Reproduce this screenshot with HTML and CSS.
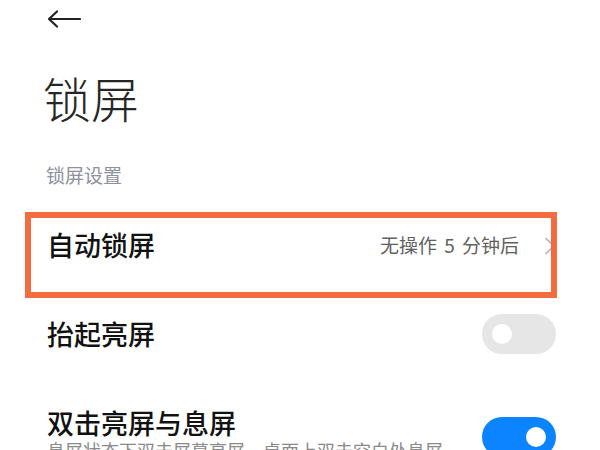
FILE: index.html
```html
<!DOCTYPE html>
<html lang="zh-CN">
<head>
<meta charset="utf-8">
<title>锁屏</title>
<link rel="stylesheet" href="styles.css">
</head>
<body>
<div class="page">
  <div class="topbar">
    <svg class="back" width="34" height="18" viewBox="0 0 34 18" aria-hidden="true">
      <path d="M2 9 H33 M10 1.5 L2 9 L10 16.5" fill="none" stroke="#222" stroke-width="2.2" stroke-linecap="round" stroke-linejoin="round"/>
    </svg>
  </div>
  <h1 class="title">锁屏</h1>
  <div class="section-label">锁屏设置</div>

  <div class="row row-first">
    <div class="row-title">自动锁屏</div>
    <div class="row-value">无操作 5 分钟后</div>
    <svg class="chevron" width="12" height="18" viewBox="0 0 12 18" aria-hidden="true">
      <path d="M2 1.5 L10 9 L2 16.5" fill="none" stroke="#b0b0b0" stroke-width="1.6" stroke-linecap="round" stroke-linejoin="round"/>
    </svg>
    <div class="highlight"></div>
  </div>

  <div class="row">
    <div class="row-title">抬起亮屏</div>
    <div class="toggle toggle-off"><span class="knob"></span></div>
  </div>

  <div class="row row-sub">
    <div class="row-text">
      <div class="row-title sub-title">双击亮屏与息屏</div>
      <div class="row-desc">息屏状态下双击屏幕亮屏，桌面上双击空白处息屏</div>
    </div>
    <div class="toggle toggle-on"><span class="knob"></span></div>
  </div>
</div>
</body>
</html>
```
FILE: styles.css
```css
html, body {
  margin: 0;
  padding: 0;
  background: #ffffff;
}
body {
  font-family: "Noto Sans CJK SC", "Noto Sans", sans-serif;
  color: #1f1f1f;
  width: 600px;
  height: 450px;
  overflow: hidden;
}
.page {
  display: flex;
  flex-direction: column;
}
.topbar {
  height: 38px;
  display: flex;
  align-items: center;
  padding-left: 47px;
}
.back {
  display: block;
}
.title {
  margin: 29px 0 0 0;
  padding-left: 43px;
  font-size: 48px;
  line-height: 60px;
  font-weight: 300;
  color: #262626;
}
.section-label {
  margin-top: 35px;
  padding-left: 46px;
  font-size: 19px;
  line-height: 26px;
  color: #8d909d;
}
.row {
  position: relative;
  display: flex;
  align-items: center;
  height: 89px;
  padding: 0 44px 0 47px;
  box-sizing: border-box;
}
.row-first {
  margin-top: 12px;
}
.row-title {
  font-size: 27px;
  line-height: 34px;
  font-weight: 500;
  color: #111;
  flex: 1;
}
.row-value {
  font-size: 19px;
  line-height: 26px;
  word-spacing: 3px;
  color: #616161;
  margin-right: 25px;
}
.chevron {
  display: block;
  margin-top: 3px;
}
.highlight {
  position: absolute;
  left: 25px;
  top: 12px;
  width: 532px;
  height: 86px;
  box-sizing: border-box;
  border: 6px solid #f36c3f;
  pointer-events: none;
}
.toggle {
  width: 74px;
  height: 40px;
  border-radius: 20px;
  position: relative;
  flex: none;
}
.toggle-off {
  background: #e6e6e6;
}
.toggle-on {
  background: #0d84ff;
}
.knob {
  position: absolute;
  top: 10px;
  width: 20px;
  height: 20px;
  border-radius: 50%;
  background: #fff;
}
.toggle-off .knob {
  left: 10px;
}
.toggle-on .knob {
  right: 10px;
}
.row-sub {
  height: auto;
  align-items: flex-start;
  padding-top: 29px;
}
.row-sub .toggle {
  margin-top: 10px;
}
.row-text {
  flex: 1;
  display: flex;
  flex-direction: column;
}
.row-title.sub-title {
  line-height: 32px;
}
.row-desc {
  font-size: 18px;
  line-height: 22px;
  color: #8a8a8a;
}
```
